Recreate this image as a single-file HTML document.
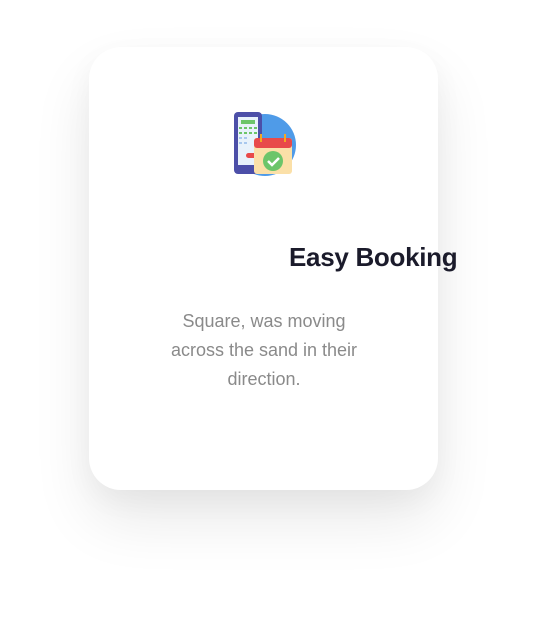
<!DOCTYPE html>
<html><head><style>
html,body{margin:0;padding:0;background:#fff;width:549px;height:621px;overflow:hidden;font-family:"Liberation Sans",sans-serif}
.card{position:absolute;left:89px;top:47px;width:349px;height:443px;background:#fff;border-radius:32px;box-shadow:0 30px 60px rgba(0,0,0,0.09),0 10px 30px rgba(0,0,0,0.04)}
.t{position:absolute;left:289px;top:242px;font-size:26px;font-weight:bold;color:#1b1b2b;white-space:nowrap;letter-spacing:-0.3px}
.p{position:absolute;left:160px;width:208px;top:307px;text-align:center;font-size:18px;line-height:29px;color:#8a8a8a}
svg{position:absolute;left:230px;top:110px}
</style></head><body>
<div class="card"></div>
<svg width="70" height="70" viewBox="0 0 70 70">
<circle cx="35" cy="35" r="31" fill="#4f9be8"/>
<rect x="4" y="2" width="28" height="62" rx="4" fill="#4c4fa8"/>
<rect x="8" y="7" width="20" height="48" fill="#e8f2fb"/>
<rect x="11" y="10" width="14" height="4" fill="#6cc56a"/>
<g fill="#6cc56a"><rect x="9" y="17" width="3" height="2"/><rect x="14" y="17" width="3" height="2"/><rect x="19" y="17" width="3" height="2"/><rect x="24" y="17" width="3" height="2"/><rect x="9" y="22" width="3" height="2"/><rect x="14" y="22" width="3" height="2"/><rect x="19" y="22" width="3" height="2"/><rect x="24" y="22" width="3" height="2"/></g>
<g fill="#a8c8ee"><rect x="9" y="27" width="3" height="2"/><rect x="14" y="27" width="3" height="2"/><rect x="9" y="32" width="3" height="2"/><rect x="14" y="32" width="3" height="2"/></g>
<rect x="16" y="43" width="14" height="5" rx="2.5" fill="#e84a4a"/>
<rect x="24" y="28" width="38" height="36" rx="3" fill="#fbe0a8"/>
<rect x="24" y="28" width="38" height="10" rx="3" fill="#e84a4a"/>
<rect x="30" y="24" width="2" height="8" fill="#f5a623"/><rect x="54" y="24" width="2" height="8" fill="#f5a623"/>
<circle cx="43" cy="51" r="10" fill="#6cc56a"/>
<path d="M38 51l4 4 7-7" stroke="#fff" stroke-width="2.5" fill="none"/>
</svg>
<div class="t">Easy Booking</div>
<div class="p">Square, was moving across the sand in their direction.</div>
</body></html>
